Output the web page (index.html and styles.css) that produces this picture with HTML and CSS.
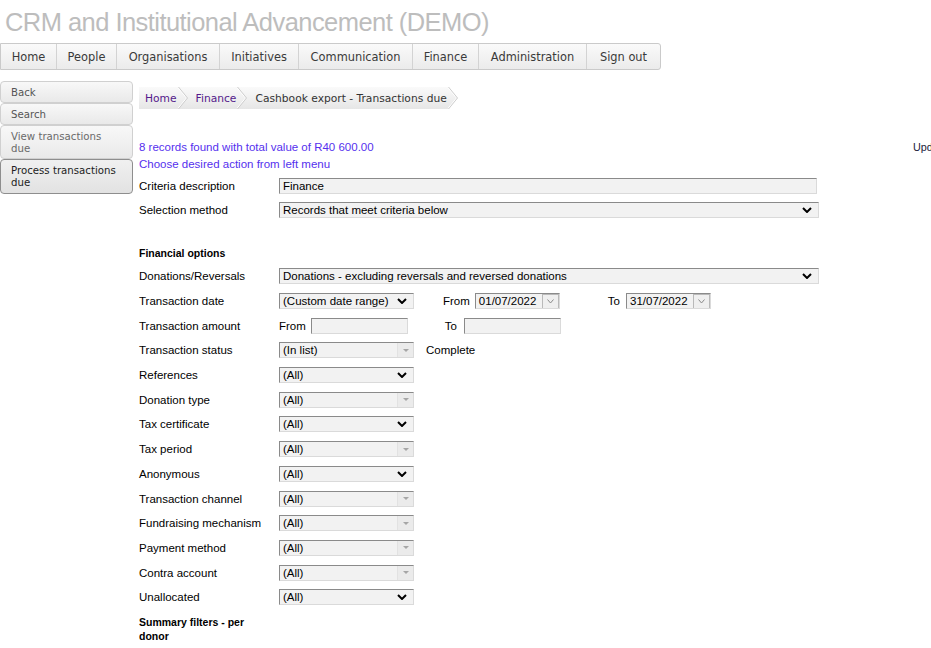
FILE: index.html
```html
<!DOCTYPE html>
<html lang="en">
<head>
<meta charset="utf-8">
<title>Cashbook export - Transactions due</title>
<link rel="stylesheet" href="styles.css">
</head>
<body>
<h1 class="title">CRM and Institutional Advancement (DEMO)</h1>
<nav class="nav">
  <a class="nav-item n-home" href="#">Home</a>
  <a class="nav-item n-people" href="#">People</a>
  <a class="nav-item n-org" href="#">Organisations</a>
  <a class="nav-item n-init" href="#">Initiatives</a>
  <a class="nav-item n-comm" href="#">Communication</a>
  <a class="nav-item n-fin" href="#">Finance</a>
  <a class="nav-item n-admin" href="#">Administration</a>
  <a class="nav-item n-sign" href="#">Sign out</a>
</nav>
<div class="layout">
  <aside class="side">
    <a class="side-btn" href="#">Back</a>
    <a class="side-btn" href="#">Search</a>
    <a class="side-btn faded" href="#">View transactions due</a>
    <a class="side-btn active" href="#">Process transactions due</a>
  </aside>
  <main class="main">
    <div class="crumbs">
      <a class="crumb link" href="#">Home</a>
      <svg class="sep" width="10" height="22" viewBox="0 0 10 22"><path d="M-0.5 0 L8.5 11 L-0.5 22" stroke="#fff" fill="none"/><path d="M0.5 0 L9.5 11 L0.5 22" stroke="#cdcdcd" fill="none"/></svg>
      <a class="crumb link" href="#">Finance</a>
      <svg class="sep" width="10" height="22" viewBox="0 0 10 22"><path d="M-0.5 0 L8.5 11 L-0.5 22" stroke="#fff" fill="none"/><path d="M0.5 0 L9.5 11 L0.5 22" stroke="#cdcdcd" fill="none"/></svg>
      <span class="crumb current">Cashbook export - Transactions due</span>
      <svg class="sep" width="10" height="22" viewBox="0 0 10 22"><path d="M0 0 H10 V22 H0 L9.5 11 Z" fill="#fff"/><path d="M-0.5 0 L8.5 11 L-0.5 22" stroke="#fff" fill="none"/><path d="M0.5 0 L9.5 11 L0.5 22" stroke="#cdcdcd" fill="none"/></svg>
    </div>

    <div class="info">
      <div class="msgs">
        <div class="msg">8 records found with total value of R40 600.00</div>
        <div class="msg">Choose desired action from left menu</div>
      </div>
      <div class="upd">Upd</div>
    </div>

    <div class="form">
      <div class="row tight">
        <span class="lbl">Criteria description</span>
        <span class="field w-input">Finance</span>
      </div>
      <div class="row tight">
        <span class="lbl">Selection method</span>
        <span class="field sel w-long">Records that meet criteria below<svg class="chev" width="10" height="6" viewBox="0 0 10 6"><path d="M1 1 L5 5 L9 1" stroke="#000" stroke-width="2" fill="none"/></svg></span>
      </div>

      <div class="heading">Financial options</div>

      <div class="row">
        <span class="lbl">Donations/Reversals</span>
        <span class="field sel w-long">Donations - excluding reversals and reversed donations<svg class="chev" width="10" height="6" viewBox="0 0 10 6"><path d="M1 1 L5 5 L9 1" stroke="#000" stroke-width="2" fill="none"/></svg></span>
      </div>
      <div class="row">
        <span class="lbl">Transaction date</span>
        <span class="field sel w-short">(Custom date range)<svg class="chev" width="10" height="6" viewBox="0 0 10 6"><path d="M1 1 L5 5 L9 1" stroke="#000" stroke-width="2" fill="none"/></svg></span>
        <span class="txt from-date">From</span>
        <span class="field date">01/07/2022<span class="dbtn"><svg width="7" height="5" viewBox="0 0 7 5"><path d="M0.5 0.5 L3.5 4 L6.5 0.5" stroke="#8a8a8a" fill="none"/></svg></span></span>
        <span class="txt to-date">To</span>
        <span class="field date">31/07/2022<span class="dbtn"><svg width="7" height="5" viewBox="0 0 7 5"><path d="M0.5 0.5 L3.5 4 L6.5 0.5" stroke="#8a8a8a" fill="none"/></svg></span></span>
      </div>
      <div class="row">
        <span class="lbl">Transaction amount</span>
        <span class="txt">From</span>
        <span class="field amount"></span>
        <span class="txt to-amount">To</span>
        <span class="field amount"></span>
      </div>
      <div class="row">
        <span class="lbl">Transaction status</span>
        <span class="field combo w-short">(In list)<span class="cbtn"><span class="tri"></span></span></span>
        <span class="txt status">Complete</span>
      </div>
      <div class="row">
        <span class="lbl">References</span>
        <span class="field sel w-short">(All)<svg class="chev" width="10" height="6" viewBox="0 0 10 6"><path d="M1 1 L5 5 L9 1" stroke="#000" stroke-width="2" fill="none"/></svg></span>
      </div>
      <div class="row">
        <span class="lbl">Donation type</span>
        <span class="field combo w-short">(All)<span class="cbtn"><span class="tri"></span></span></span>
      </div>
      <div class="row">
        <span class="lbl">Tax certificate</span>
        <span class="field sel w-short">(All)<svg class="chev" width="10" height="6" viewBox="0 0 10 6"><path d="M1 1 L5 5 L9 1" stroke="#000" stroke-width="2" fill="none"/></svg></span>
      </div>
      <div class="row">
        <span class="lbl">Tax period</span>
        <span class="field combo w-short">(All)<span class="cbtn"><span class="tri"></span></span></span>
      </div>
      <div class="row">
        <span class="lbl">Anonymous</span>
        <span class="field sel w-short">(All)<svg class="chev" width="10" height="6" viewBox="0 0 10 6"><path d="M1 1 L5 5 L9 1" stroke="#000" stroke-width="2" fill="none"/></svg></span>
      </div>
      <div class="row">
        <span class="lbl">Transaction channel</span>
        <span class="field combo w-short">(All)<span class="cbtn"><span class="tri"></span></span></span>
      </div>
      <div class="row">
        <span class="lbl">Fundraising mechanism</span>
        <span class="field combo w-short">(All)<span class="cbtn"><span class="tri"></span></span></span>
      </div>
      <div class="row">
        <span class="lbl">Payment method</span>
        <span class="field combo w-short">(All)<span class="cbtn"><span class="tri"></span></span></span>
      </div>
      <div class="row">
        <span class="lbl">Contra account</span>
        <span class="field combo w-short">(All)<span class="cbtn"><span class="tri"></span></span></span>
      </div>
      <div class="row">
        <span class="lbl">Unallocated</span>
        <span class="field sel w-short">(All)<svg class="chev" width="10" height="6" viewBox="0 0 10 6"><path d="M1 1 L5 5 L9 1" stroke="#000" stroke-width="2" fill="none"/></svg></span>
      </div>

      <div class="heading2">Summary filters - per donor</div>
    </div>
  </main>
</div>
</body>
</html>
```

FILE: styles.css
```css
* { box-sizing: border-box; }
html, body { margin: 0; padding: 0; }
body {
  width: 931px;
  height: 648px;
  overflow: hidden;
  background: #fff;
  color: #000;
  font-family: "Liberation Sans", Arial, sans-serif;
}

.title {
  margin: 0;
  height: 43px;
  padding: 2px 0 0 5px;
  font-family: "Liberation Sans", Arial, sans-serif;
  font-weight: normal;
  font-size: 25.5px;
  letter-spacing: -0.55px;
  line-height: 41px;
  color: #bdbdbd;
  white-space: nowrap;
}

.nav {
  display: flex;
  width: 661px;
  height: 27px;
  border: 1px solid #cacaca;
  border-radius: 0 3px 3px 0;
  background: linear-gradient(#fafafa, #ebebeb);
}
.nav-item {
  display: flex;
  align-items: center;
  justify-content: center;
  border-right: 1px solid #d3d3d3;
  font-family: "DejaVu Sans", sans-serif;
  font-size: 11.4px;
  color: #3a3a3a;
  text-decoration: none;
  white-space: nowrap;
}
.nav-item:last-child { border-right: 0; }
.n-home { width: 56px; }
.n-people { width: 60px; }
.n-org { width: 103px; }
.n-init { width: 79px; }
.n-comm { width: 114px; }
.n-fin { width: 66px; }
.n-admin { width: 108px; }
.n-sign { width: 73px; }

.layout {
  display: flex;
  align-items: flex-start;
}

.side {
  width: 133px;
  flex: none;
  margin-top: 11px;
  display: flex;
  flex-direction: column;
}
.side-btn {
  display: block;
  border: 1px solid #d0d0d0;
  border-radius: 4px;
  background: linear-gradient(#f8f8f8, #e9e9e9);
  padding: 5px 16px 3px 10px;
  font-family: "DejaVu Sans", sans-serif;
  font-size: 10.2px;
  line-height: 12px;
  color: #555;
  text-decoration: none;
}
.side-btn.faded { color: #6a6a6a; }
.side-btn.active {
  border-color: #8e8e8e;
  background: linear-gradient(#f0f0f0, #e2e2e2);
  color: #222;
  padding-bottom: 4px;
}

.main {
  margin-left: 6px;
  flex: 1;
  min-width: 0;
}

.crumbs {
  display: inline-flex;
  align-items: center;
  height: 22px;
  margin-top: 17px;
  background: linear-gradient(#fafafa, #e6e6e6);
  font-family: "DejaVu Sans", sans-serif;
  font-size: 10.7px;
}
.crumb {
  padding: 0 1px 0 8px;
  text-decoration: none;
  white-space: nowrap;
}
.crumb:first-child { padding-left: 6px; }
.crumb.link { color: #551a8b; }
.crumb.current { color: #333; }
.sep { display: block; flex: none; }

.info {
  display: grid;
  grid-template-columns: 774px max-content;
  margin-top: 30px;
  font-size: 11.5px;
  line-height: 17px;
}
.msg { color: #5530ee; white-space: nowrap; }
.upd { color: #1a1a3a; white-space: nowrap; font-size: 10.8px; }

.form {
  margin-top: 1px;
  font-size: 11.5px;
}
.row {
  display: flex;
  align-items: center;
  height: 24.7px;
  white-space: nowrap;
}
.row.tight { height: 24px; }
.lbl { width: 140px; flex: none; }
.heading {
  display: flex;
  align-items: center;
  height: 22px;
  margin-top: 20px;
  font-weight: bold;
  font-size: 10.5px;
}
.heading2 {
  width: 128px;
  padding-top: 5px;
  font-weight: bold;
  font-size: 10.5px;
  line-height: 14px;
}

.field {
  display: flex;
  align-items: center;
  flex: none;
  height: 16px;
  padding-left: 3px;
  border: 1px solid;
  border-color: #8a8a8a #dadada #dadada #8a8a8a;
  background: #f2f2f2;
  font-size: 11.5px;
  line-height: 14px;
  white-space: nowrap;
  overflow: hidden;
}
.w-long { width: 540px; }
.w-input { width: 538px; }
.w-short { width: 135px; }
.sel { justify-content: space-between; padding-right: 6px; }
.chev { display: block; flex: none; }

.combo { justify-content: space-between; padding-right: 0; }
.cbtn {
  display: flex;
  align-items: center;
  justify-content: center;
  width: 16px;
  height: 100%;
  border-left: 1px solid #e2e2e2;
  background: #ebebeb;
}
.tri {
  width: 0;
  height: 0;
  border-left: 3px solid transparent;
  border-right: 3px solid transparent;
  border-top: 3px solid #a6a6a6;
}

.txt { flex: none; }
.from-date { margin: 0 5px 0 29px; }
.to-date { margin: 0 6px 0 48px; }
.to-amount { margin: 0 2px 0 37px; }
.txt + .amount { margin-left: 5px; }
.status { margin-left: 12px; }

.date {
  width: 85px;
  justify-content: space-between;
  padding-right: 0;
}
.dbtn {
  display: flex;
  align-items: center;
  justify-content: center;
  width: 17px;
  height: 16px;
  margin-top: 1px;
  border: 1px solid #b9b9b9;
  background: #efefef;
}
.amount { width: 97px; }
```
